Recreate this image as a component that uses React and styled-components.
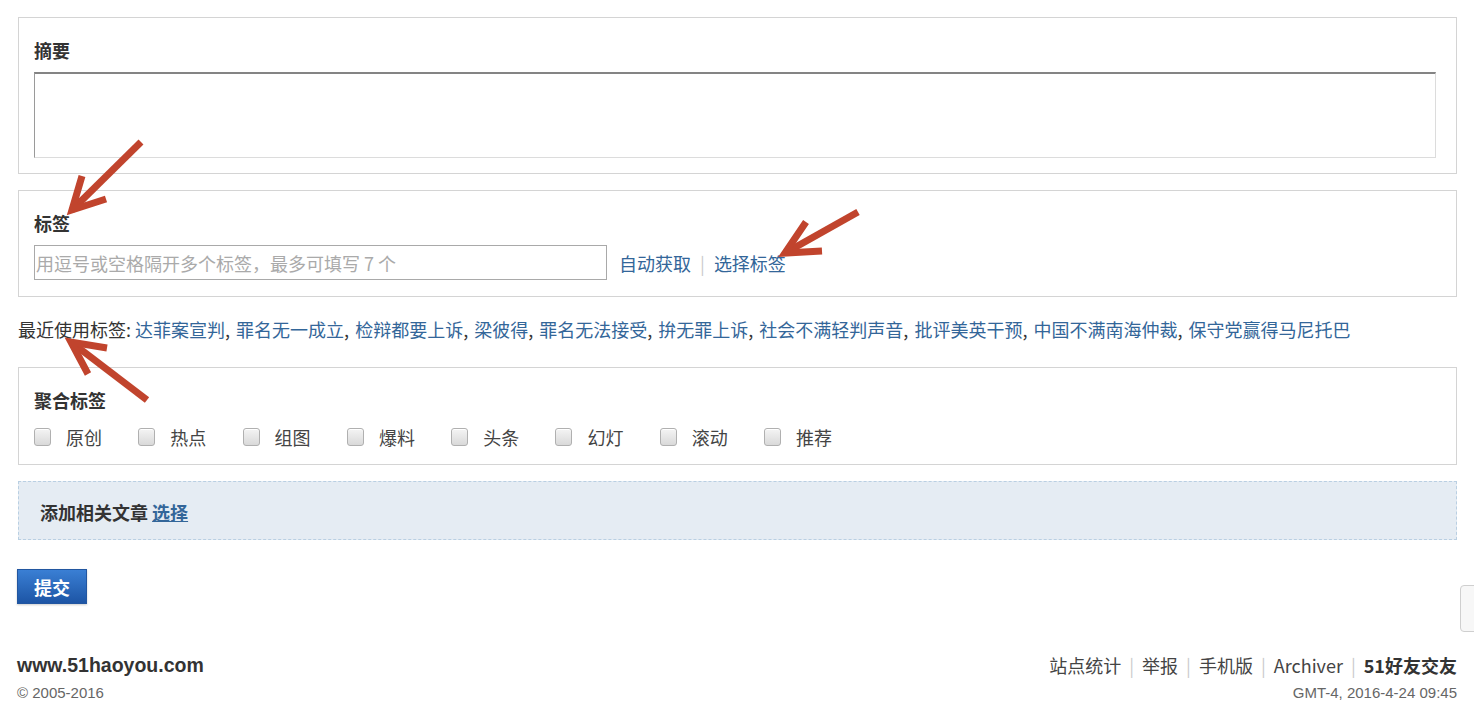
import React from "react";
import styled, { createGlobalStyle } from "styled-components";

const Global = createGlobalStyle`
  html, body { margin: 0; padding: 0; background: #fff; }
  body {
    font-family: "Noto Sans CJK SC", "Noto Sans", sans-serif;
    font-size: 18px;
    color: #333;
  }
  * { box-sizing: border-box; }
`;

const Page = styled.div`
  position: relative;
  width: 1474px;
  height: 713px;
  overflow: hidden;
  padding: 17px 17px 0 18px;
`;

const Box = styled.div`
  border: 1px solid #d4d4d4;
  padding: 20px 15px ${(p) => p.$pb || 15}px;
  margin-bottom: ${(p) => p.$mb || 0}px;
`;

const Heading = styled.div`
  font-weight: 700;
  font-size: 18px;
  line-height: 24px;
  color: #333;
  margin-bottom: ${(p) => p.$mb || 10}px;
`;

const TextArea = styled.textarea`
  display: block;
  width: 1402px;
  height: 86px;
  margin: 0;
  resize: none;
  border-style: solid;
  border-width: 2px 1px 1px 1px;
  border-color: #848484 #dcdcdc #dcdcdc #9a9a9a;
  outline: none;
  background: #fff;
`;

const TagRow = styled.div`
  display: flex;
  align-items: center;
  height: 35px;
`;

const TagInput = styled.input`
  width: 573px;
  height: 35px;
  border: 1px solid #a9a9a9;
  padding: 0 1px;
  margin: 0 12px 0 0;
  font-family: "Noto Sans CJK SC", sans-serif;
  font-size: 18px;
  outline: none;
  &::placeholder { color: #aaa; }
`;

const Link = styled.a`
  color: #336699;
  text-decoration: ${(p) => (p.$u ? "underline" : "none")};
  font-weight: ${(p) => (p.$b ? 700 : 400)};
  cursor: pointer;
`;

const Sep = styled.span`
  color: #ccc;
  margin: 0 ${(p) => p.$m || 9}px;
`;

const Recent = styled.div`
  line-height: 24px;
  margin: 20px 0 26px;
  color: #333;
  white-space: nowrap;
`;

const Comma = styled.span`
  margin-right: 2px;
`;

const CheckRow = styled.div`
  display: flex;
  align-items: center;
  height: 24px;
`;

const CheckItem = styled.label`
  display: flex;
  align-items: center;
  width: 104.3px;
  color: #444;
  line-height: 24px;
`;

const Check = styled.span`
  display: inline-block;
  width: 17px;
  height: 18px;
  margin-right: 15px;
  border: 1px solid #b0b0b0;
  border-radius: 3px;
  background: linear-gradient(#f4f4f4, #d9d9d9);
  box-shadow: inset 0 1px 0 #fff;
`;

const Related = styled.div`
  border: 1px dashed #b9cfe2;
  background: #e5ecf3;
  padding: 18px 21px 15px;
  line-height: 24px;
  font-weight: 700;
  color: #333;
  margin-top: 16px;
`;

const Submit = styled.button`
  display: block;
  margin: 29px 0 0 -1px;
  width: 70px;
  height: 35px;
  padding: 0;
  border: 1px solid #2256a0;
  background: linear-gradient(#3a7fd4, #1d55a5);
  color: #fff;
  font-family: "Noto Sans CJK SC", sans-serif;
  font-size: 18px;
  font-weight: 700;
  box-shadow: 0 1px 2px rgba(0,0,0,0.2);
`;

const Footer = styled.div`
  display: flex;
  justify-content: space-between;
  margin: 49px 0 0 -1px;
`;

const FootCol = styled.div`
  display: flex;
  flex-direction: column;
  align-items: ${(p) => (p.$right ? "flex-end" : "flex-start")};
`;

const Site = styled.div`
  font-family: "Liberation Sans", Arial, sans-serif;
  font-weight: 700;
  font-size: 19.5px;
  line-height: 24px;
  color: #333;
`;

const Small = styled.div`
  font-family: "Liberation Sans", Arial, sans-serif;
  font-size: 15px;
  line-height: 20px;
  color: #666;
  margin-top: 6px;
`;

const FootLinks = styled.div`
  line-height: 24px;
  color: #444;
`;

const Strong = styled.strong`
  color: #333;
`;

const TopBtn = styled.div`
  position: absolute;
  left: 1460px;
  top: 585px;
  width: 40px;
  height: 47px;
  border: 1px solid #cfcfcf;
  border-radius: 4px;
  background: #f7f7f7;
`;

const Overlay = styled.svg`
  position: absolute;
  left: 0;
  top: 0;
  pointer-events: none;
`;

const recent = [
  "达菲案宣判",
  "罪名无一成立",
  "检辩都要上诉",
  "梁彼得",
  "罪名无法接受",
  "拚无罪上诉",
  "社会不满轻判声音",
  "批评美英干预",
  "中国不满南海仲裁",
  "保守党赢得马尼托巴",
];

const checks = ["原创", "热点", "组图", "爆料", "头条", "幻灯", "滚动", "推荐"];

const arrows = [
  { tail: [141, 142], tip: [72, 210], w1: [106, 199], w2: [82, 176] },
  { tail: [858, 212], tip: [785, 253], w1: [822, 251], w2: [806, 222] },
  { tail: [147, 400], tip: [71, 342], w1: [107, 348], w2: [88, 374] },
];

function Arrow({ a }) {
  const c = "#c1442d";
  return (
    <g stroke={c} strokeWidth="7" fill="none">
      <line x1={a.tail[0]} y1={a.tail[1]} x2={a.tip[0]} y2={a.tip[1]} />
      <polyline
        points={`${a.w1[0]},${a.w1[1]} ${a.tip[0]},${a.tip[1]} ${a.w2[0]},${a.w2[1]}`}
        strokeLinejoin="miter"
        strokeMiterlimit="10"
      />
    </g>
  );
}

export default function App() {
  return (
    <Page>
      <Global />
      <Box $mb={16}>
        <Heading>摘要</Heading>
        <TextArea />
      </Box>
      <Box $pb={16}>
        <Heading>标签</Heading>
        <TagRow>
          <TagInput placeholder="用逗号或空格隔开多个标签，最多可填写 7 个" />
          <Link>自动获取</Link>
          <Sep>|</Sep>
          <Link>选择标签</Link>
        </TagRow>
      </Box>
      <Recent>
        最近使用标签:{" "}
        {recent.map((t, i) => (
          <React.Fragment key={t}>
            <Link>{t}</Link>
            {i < recent.length - 1 ? <Comma>, </Comma> : null}
          </React.Fragment>
        ))}
      </Recent>
      <Box $pb={15}>
        <Heading $mb={13}>聚合标签</Heading>
        <CheckRow>
          {checks.map((c) => (
            <CheckItem key={c}>
              <Check />
              {c}
            </CheckItem>
          ))}
        </CheckRow>
      </Box>
      <Related>
        添加相关文章 <Link $u $b>选择</Link>
      </Related>
      <Submit>提交</Submit>
      <Footer>
        <FootCol>
          <Site>www.51haoyou.com</Site>
          <Small>© 2005-2016</Small>
        </FootCol>
        <FootCol $right>
          <FootLinks>
            站点统计<Sep $m={8}>|</Sep>举报<Sep $m={8}>|</Sep>手机版
            <Sep $m={8}>|</Sep>Archiver<Sep $m={8}>|</Sep>
            <Strong>51好友交友</Strong>
          </FootLinks>
          <Small>GMT-4, 2016-4-24 09:45</Small>
        </FootCol>
      </Footer>
      <TopBtn />
      <Overlay width="1474" height="713" viewBox="0 0 1474 713">
        {arrows.map((a, i) => (
          <Arrow key={i} a={a} />
        ))}
      </Overlay>
    </Page>
  );
}
